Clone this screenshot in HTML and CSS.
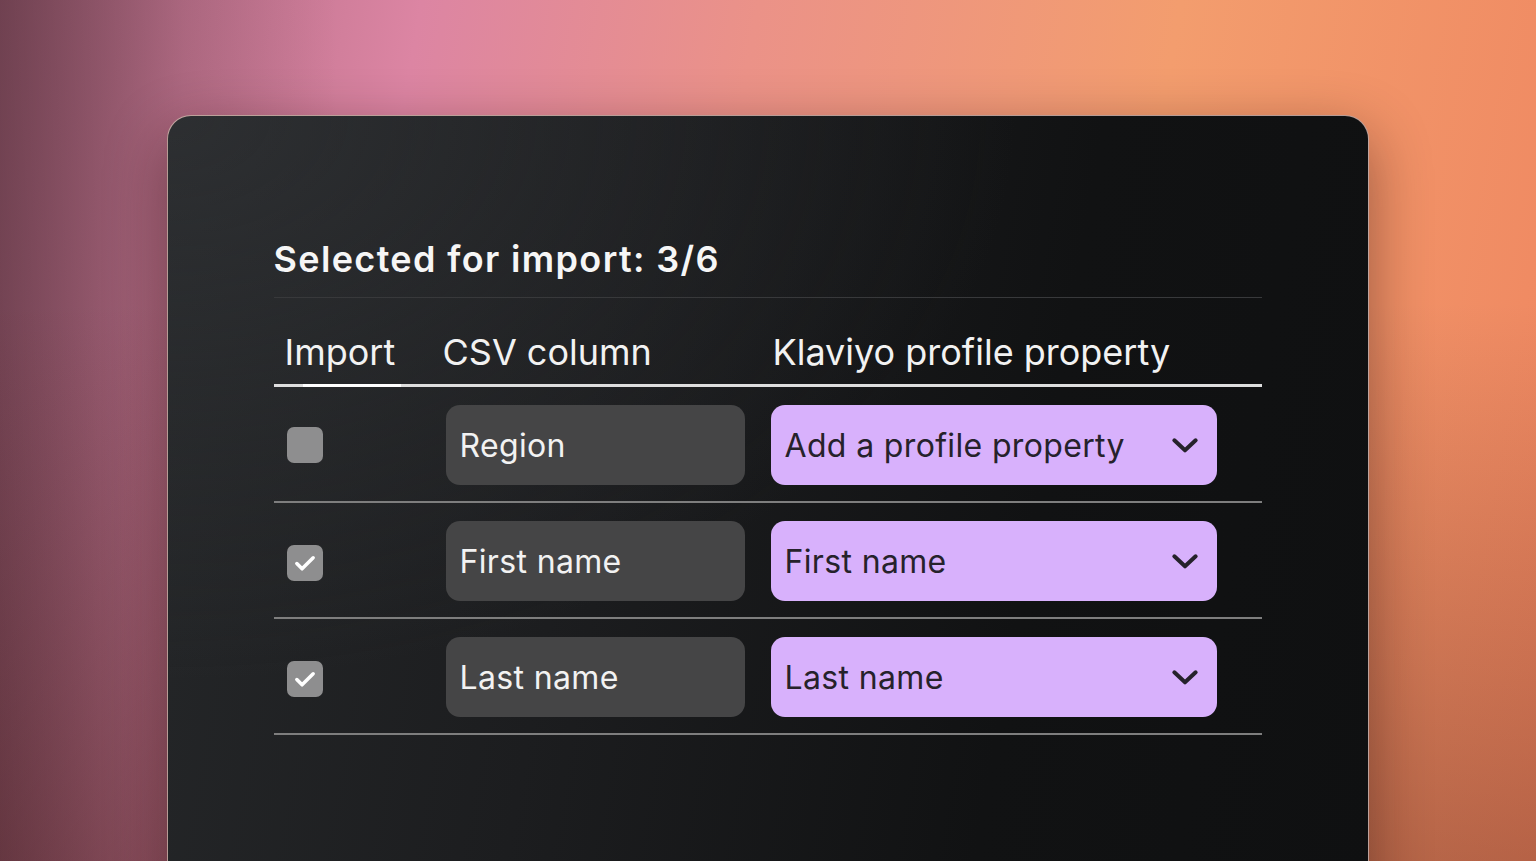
FILE: index.html
```html
<!DOCTYPE html>
<html lang="en">
<head>
    <meta charset="UTF-8">
    <meta name="viewport" content="width=device-width, initial-scale=1.0">
    <title>Import profiles - Map columns</title>
    <link rel="stylesheet" href="styles.css">
</head>
<body>
    <div class="stage">
        <div class="card">
            <h1 class="title">Selected for import: 3/6</h1>

            <div class="table">
                <div class="head">
                    <div class="head-cell import">Import</div>
                    <div class="head-cell csv">CSV column</div>
                    <div class="head-cell prop">Klaviyo profile property</div>
                </div>

                <div class="row">
                    <div class="check"></div>
                    <div class="field">Region</div>
                    <div class="select">
                        <span>Add a profile property</span>
                        <svg class="chevron" viewBox="0 0 24 24"><path d="M4 8.5l8 7.5 8-7.5"/></svg>
                    </div>
                </div>

                <div class="row">
                    <div class="check checked">
                        <svg viewBox="0 0 24 24"><path d="M5 12.5l4.5 4.5L19 7.5"/></svg>
                    </div>
                    <div class="field">First name</div>
                    <div class="select">
                        <span>First name</span>
                        <svg class="chevron" viewBox="0 0 24 24"><path d="M4 8.5l8 7.5 8-7.5"/></svg>
                    </div>
                </div>

                <div class="row">
                    <div class="check checked">
                        <svg viewBox="0 0 24 24"><path d="M5 12.5l4.5 4.5L19 7.5"/></svg>
                    </div>
                    <div class="field">Last name</div>
                    <div class="select">
                        <span>Last name</span>
                        <svg class="chevron" viewBox="0 0 24 24"><path d="M4 8.5l8 7.5 8-7.5"/></svg>
                    </div>
                </div>
            </div>
        </div>
    </div>
</body>
</html>
```

FILE: styles.css
```css
* {
    margin: 0;
    padding: 0;
    box-sizing: border-box;
}

body {
    font-family: Inter, 'Noto Sans', 'Liberation Sans', sans-serif;
    width: 1536px;
    height: 861px;
    overflow: hidden;
}

.stage {
    width: 100%;
    height: 100%;
    padding: 115px 0 0 167px;
    background:
        linear-gradient(180deg, rgba(0,0,0,0) 0%, rgba(0,0,0,0) 35%, rgba(50,15,10,0.3) 100%),
        linear-gradient(90deg, rgba(50,25,30,0.45) 0%, rgba(50,25,30,0.12) 12%, rgba(0,0,0,0) 22%),
        linear-gradient(100deg, #a2627a 0%, #dc85a3 25%, #eb9288 45%, #f39d6e 70%, #ef8660 100%);
}

.card {
    width: 1202px;
    height: 800px;
    border-radius: 24px;
    border: 1.5px solid rgba(255, 215, 205, 0.7);
    background:
        radial-gradient(ellipse at 0% 0%, rgba(50,52,55,0.6) 0%, rgba(0,0,0,0) 50%),
        linear-gradient(100deg, #252729 0%, #1c1d1f 35%, #111213 70%, #0f1011 100%);
    box-shadow: 0 20px 60px rgba(40, 10, 10, 0.45);
    padding: 118px 0 0 105.5px;
}

.title {
    color: #f6f6f6;
    font-size: 36px;
    font-weight: 600;
    line-height: 50px;
    letter-spacing: 1.35px;
    width: 988px;
    padding-bottom: 13px;
    border-bottom: 1px solid #38393b;
}

.table {
    width: 988px;
}

.head {
    display: grid;
    grid-template-columns: 172px 325px 1fr;
    align-items: end;
    height: 89px;
    padding-bottom: 10px;
    border-bottom: 3px solid #dedede;
    position: relative;
}

.head::after {
    content: '';
    position: absolute;
    left: 29px;
    bottom: -3px;
    width: 98px;
    height: 3px;
    background: #ffffff;
}

.head-cell {
    color: #f2f2f2;
    font-size: 36px;
    font-weight: 400;
    line-height: 44px;
}

.head-cell.import {
    padding-left: 11px;
}

.head-cell.csv {
    margin-left: -3px;
}

.head-cell.prop {
    padding-left: 2px;
}

.row {
    display: grid;
    grid-template-columns: 172px 325px 1fr;
    align-items: center;
    padding: 18px 0 16px;
    border-bottom: 2px solid #7e7e7e;
}

.check {
    width: 36px;
    height: 36px;
    margin-left: 13px;
    border-radius: 7px;
    background: #8e8e8f;
    display: flex;
    align-items: center;
    justify-content: center;
}

.row:nth-child(3) .check,
.row:nth-child(4) .check {
    margin-top: 4px;
}

.check svg {
    width: 28px;
    height: 28px;
    fill: none;
    stroke: #ffffff;
    stroke-width: 3;
    stroke-linecap: round;
    stroke-linejoin: round;
}

.field {
    width: 299px;
    height: 80px;
    border-radius: 14px;
    background: #454546;
    color: #f2f2f2;
    font-size: 32px;
    letter-spacing: 0.35px;
    display: flex;
    align-items: center;
    padding-left: 14px;
}

.select {
    width: 446px;
    height: 80px;
    border-radius: 14px;
    background: #d8b1fc;
    color: #26222b;
    font-size: 32px;
    letter-spacing: 0.35px;
    display: flex;
    align-items: center;
    justify-content: space-between;
    padding: 0 16px 0 14px;
}

.chevron {
    width: 32px;
    height: 32px;
    fill: none;
    stroke: #26222b;
    stroke-width: 3;
    stroke-linecap: round;
    stroke-linejoin: round;
}
```
